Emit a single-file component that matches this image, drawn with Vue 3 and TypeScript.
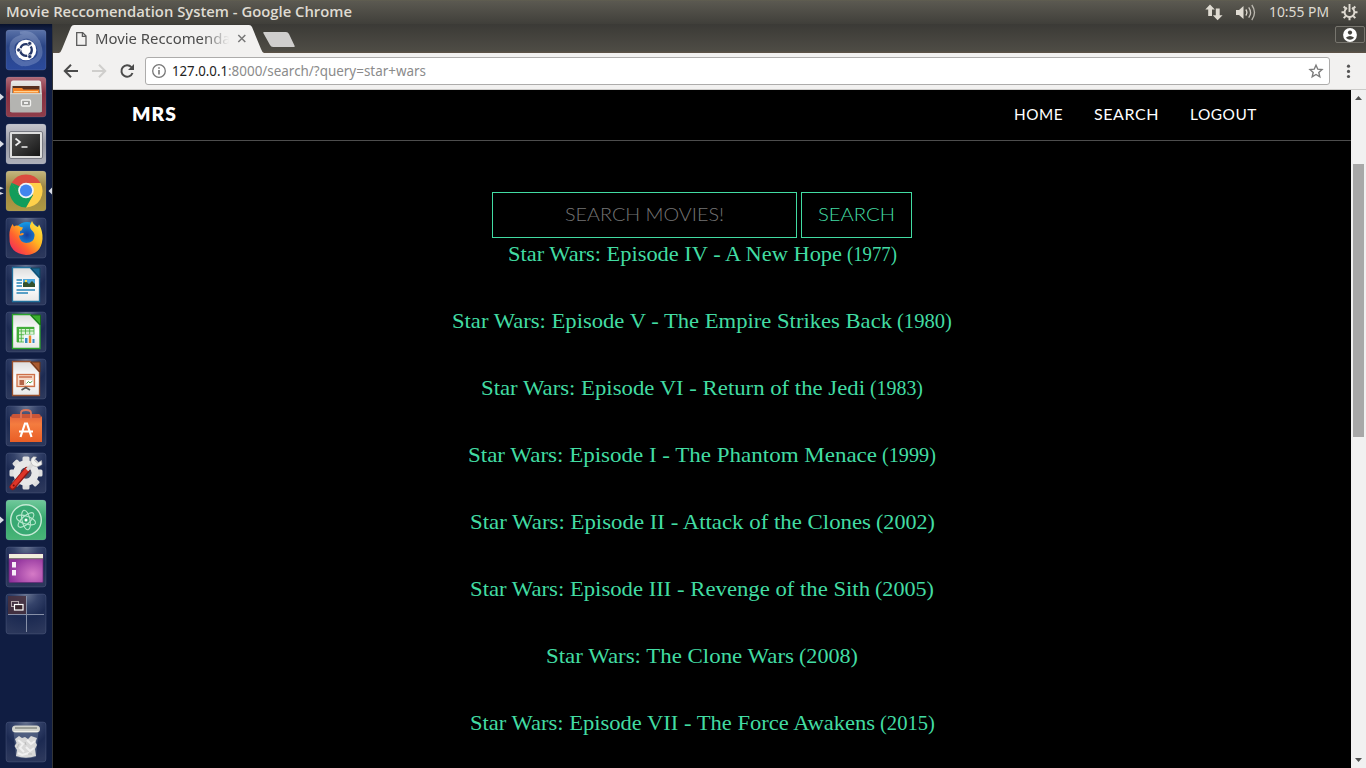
<script setup lang="ts">
import { h } from 'vue'
import type { FunctionalComponent } from 'vue'

interface FitProps { text: string; w: number; height: number; base: number }

// Single line of text set to an exact measure.
const FitText: FunctionalComponent<FitProps> = (p) =>
  h('svg', { width: p.w, height: p.height, overflow: 'visible' }, [
    h('text', { x: 0, y: p.base, textLength: p.w, lengthAdjust: 'spacingAndGlyphs' }, p.text),
  ])
FitText.props = ['text', 'w', 'height', 'base']

const nav = [
  { label: 'HOME', w: 49 },
  { label: 'SEARCH', w: 65 },
  { label: 'LOGOUT', w: 67 },
]

const movies = [
  { title: 'Star Wars: Episode IV - A New Hope', w: 334, year: '(1977)', yw: 50 },
  { title: 'Star Wars: Episode V - The Empire Strikes Back', w: 440, year: '(1980)', yw: 55 },
  { title: 'Star Wars: Episode VI - Return of the Jedi', w: 384, year: '(1983)', yw: 53 },
  { title: 'Star Wars: Episode I - The Phantom Menace', w: 409, year: '(1999)', yw: 54 },
  { title: 'Star Wars: Episode II - Attack of the Clones', w: 401, year: '(2002)', yw: 59 },
  { title: 'Star Wars: Episode III - Revenge of the Sith', w: 400, year: '(2005)', yw: 59 },
  { title: 'Star Wars: The Clone Wars', w: 248, year: '(2008)', yw: 59 },
  { title: 'Star Wars: Episode VII - The Force Awakens', w: 405, year: '(2015)', yw: 55 },
]
const teeth = [0, 45, 90, 135, 180, 225, 270, 315]
</script>

<template>
  <div class="desktop">
    <header class="panel">
      <FitText class="panel-title" text="Movie Reccomendation System - Google Chrome" :w="346" :height="24" :base="17" />
      <div class="indicators">
        <svg width="18" height="24" fill="#dfdbd2">
          <path d="M5 4.5 L9.8 9.6 H7 V16 H3.2 V9.6 H.3 Z" />
          <path d="M12.6 20.3 L17.6 15.2 H14.7 V8.5 H10.8 V15.2 H7.8 Z" />
        </svg>
        <svg class="volume" width="21" height="24" fill="none" stroke="#dfdbd2" stroke-width="1.3">
          <path d="M0 10 H3 L7.5 6 V19 L3 15 H0 Z" fill="#dfdbd2" stroke="none" />
          <path d="M9.8 9.5 Q12 12.5 9.8 15.5" />
          <path d="M12.7 7.3 Q16.4 12.5 12.7 17.7" opacity=".85" />
          <path d="M15.8 5 Q21.2 12.5 15.8 20" opacity=".75" />
        </svg>
        <FitText class="clock" text="10:55 PM" :w="60" :height="24" :base="17" />
        <svg class="gear" width="17" height="24" fill="none" stroke="#dfdbd2">
          <path d="M6 7.9 A4.9 4.9 0 1 0 11 7.9" stroke-width="1.9" />
          <path d="M8.5 4 V12" stroke-width="1.9" />
          <path d="M.5 12.3 H3.5 M13.5 12.3 H16.5 M2.7 6.5 L4.7 8.5 M14.3 6.5 L12.3 8.5 M2.7 18.1 L4.7 16.1 M14.3 18.1 L12.3 16.1 M8.5 17 V20.2" stroke-width="2" />
        </svg>
      </div>
    </header>

    <div class="below">
      <aside class="launcher">
        <svg class="defs" width="0" height="0">
          <defs>
            <radialGradient id="glass" cx=".5" cy="0" r="1">
              <stop offset="0" stop-color="#66728f" /><stop offset=".3" stop-color="#35436a" />
              <stop offset=".6" stop-color="#1c2a52" /><stop offset="1" stop-color="#2b375b" />
            </radialGradient>
            <linearGradient id="blue" x1="0" y1="0" x2="0" y2="1"><stop offset="0" stop-color="#5a72a8" /><stop offset=".4" stop-color="#2a4586" /><stop offset="1" stop-color="#2b4a9c" /></linearGradient>
            <linearGradient id="red" x1="0" y1="0" x2="0" y2="1"><stop offset="0" stop-color="#b06b78" /><stop offset=".4" stop-color="#872f40" /><stop offset="1" stop-color="#8f3d4a" /></linearGradient>
            <linearGradient id="grey" x1="0" y1="0" x2="0" y2="1"><stop offset="0" stop-color="#c5c5cc" /><stop offset=".5" stop-color="#999aa3" /><stop offset="1" stop-color="#aeb0b9" /></linearGradient>
            <linearGradient id="gold" x1="0" y1="0" x2="0" y2="1"><stop offset="0" stop-color="#c5b77e" /><stop offset=".4" stop-color="#9c8543" /><stop offset="1" stop-color="#b09a42" /></linearGradient>
            <linearGradient id="green" x1="0" y1="0" x2="0" y2="1"><stop offset="0" stop-color="#70c99b" /><stop offset=".5" stop-color="#34a76c" /><stop offset="1" stop-color="#49b578" /></linearGradient>
            <linearGradient id="metal" x1="0" y1="0" x2="0" y2="1"><stop offset="0" stop-color="#ececea" /><stop offset="1" stop-color="#9c9c98" /></linearGradient>
            <linearGradient id="paper" x1="0" y1="0" x2="0" y2="1"><stop offset="0" stop-color="#ddd" /><stop offset=".5" stop-color="#fff" /><stop offset="1" stop-color="#e8e8e8" /></linearGradient>
            <linearGradient id="orange" x1="0" y1="0" x2="0" y2="1"><stop offset="0" stop-color="#e4653b" /><stop offset=".3" stop-color="#f47c3f" /><stop offset="1" stop-color="#e95e26" /></linearGradient>
            <linearGradient id="dark" x1="0" y1="0" x2="1" y2="1"><stop offset="0" stop-color="#535353" /><stop offset="1" stop-color="#151515" /></linearGradient>
            <radialGradient id="violet" cx=".7" cy=".7" r=".7"><stop offset="0" stop-color="#d57ac6" /><stop offset="1" stop-color="#8e309b" /></radialGradient>
            <linearGradient id="flame" x1="1" y1="0" x2="0" y2="1"><stop offset="0" stop-color="#fff14a" /><stop offset=".4" stop-color="#ffb621" /><stop offset=".65" stop-color="#ff622e" /><stop offset="1" stop-color="#ed166c" /></linearGradient>
            <radialGradient id="globe"><stop offset="0" stop-color="#183e9e" /><stop offset="1" stop-color="#159de9" /></radialGradient>
          </defs>
        </svg>

        <!-- Dash -->
        <svg width="52" height="47">
          <rect class="tile" x="6" y="6" width="40" height="40" rx="3" fill="url(#blue)" />
          <g fill="none" stroke="#c7d4f0" stroke-width="5" opacity=".25">
            <path d="M15 35 Q7 18 20 14 Q31 8 38 21" /><path d="M37 17 Q45 34 32 38 Q20 44 14 30" />
            <path d="M20 9 Q34 6 39 20" stroke-width="3" /><path d="M13 20 Q7 35 23 41" stroke-width="3" />
          </g>
          <circle cx="26" cy="26" r="10.3" fill="#fff" />
          <circle cx="26" cy="26" r="5.8" fill="none" stroke="#253768" stroke-width="2.3" stroke-dasharray="10.7 1.45" stroke-dashoffset="4.6" />
          <g fill="#253768" stroke="#fff" stroke-width=".6"><circle cx="18.6" cy="26" r="2" /><circle cx="29.7" cy="19.4" r="2" /><circle cx="29.7" cy="32.6" r="2" /></g>
        </svg>

        <!-- Files -->
        <svg width="52" height="47">
          <path d="M0 22.5 L4 26 L0 29.5Z" fill="#d8dce5" />
          <rect class="tile" x="6" y="6" width="40" height="40" rx="3" fill="url(#red)" />
          <path d="M11 11 Q11.5 9.5 13 9.5 H39 Q40.5 9.5 41 11 L42 24 V41 H10 V24 Z" fill="url(#metal)" />
          <rect x="12.5" y="15" width="27" height="8" fill="#55301f" />
          <path d="M13 17 H22 L23.5 18.5 H39 V23 H13Z" fill="#f48224" /><path d="M14 20 H38 V21.3 H14Z" fill="#ffd08e" />
          <path d="M10.3 22.5 H41.7 V39.5 Q41.7 41.5 40 41.5 H12 Q10.3 41.5 10.3 39.5Z" fill="#b4b4b1" />
          <path d="M10.3 22.7 H41.7" stroke="#dededa" /><rect x="21.5" y="29" width="9" height="6" rx="1" fill="#9c9c99" stroke="#f2f2f0" stroke-width="1.3" />
          <path d="M24 32 H28" stroke="#eee" stroke-width="2" />
        </svg>

        <!-- Terminal -->
        <svg width="52" height="47">
          <path d="M0 22.5 L4 26 L0 29.5Z" fill="#d8dce5" />
          <rect class="tile" x="6" y="6" width="40" height="40" rx="3" fill="url(#grey)" />
          <rect x="9.5" y="13.5" width="33" height="27" rx="1.5" fill="#ddd" stroke="#777982" />
          <rect x="12" y="16" width="28" height="22" fill="url(#dark)" />
          <path d="M15.5 20.5 L20 24 L15.5 27.5" fill="none" stroke="#eee" stroke-width="1.7" /><path d="M21.5 29 H27.5" stroke="#eee" stroke-width="1.5" />
        </svg>

        <!-- Chrome -->
        <svg width="52" height="47">
          <path d="M0 21.8 L3.8 23.2 L0 24.6Z M0 27 L3.8 28.4 L0 29.8Z" fill="#d8dce5" />
          <rect class="tile" x="6" y="6" width="40" height="40" rx="3" fill="url(#gold)" />
          <path d="M26 26 L11.7 17.7 A16.5 16.5 0 0 1 40.3 17.7 Z" fill="#db4c3f" />
          <path d="M26 18 H40.5 A16.5 16.5 0 0 1 26 42.5 L33 30 Z" fill="#ffd04a" />
          <path d="M11.7 17.7 A16.5 16.5 0 0 0 26 42.5 L33 30 H19 Z" fill="#119d5b" />
          <path d="M11.7 17.7 L19 30 L21 22Z" fill="#119d5b" />
          <circle cx="26" cy="25.5" r="7.8" fill="#f1f3f5" /><circle cx="26" cy="25.5" r="6.1" fill="#4285ee" />
          <path d="M52 22.5 L48.5 26 L52 29.5Z" fill="#d8dce5" />
        </svg>

        <!-- Firefox -->
        <svg width="52" height="47">
          <rect class="tile" x="6" y="6" width="40" height="40" rx="3" fill="url(#glass)" />
          <circle cx="27" cy="23" r="13" fill="url(#globe)" />
          <path d="M11 15 L12.5 12 L14 14.5 Q17 12.5 20.5 15 L23 15.5 L21.5 18.5 L20 19 V22 Q23 20 24 22 Q22 24 19 23.5 Q19.5 30 26 31 Q34 31 34.5 24 Q35 21 31.5 18 Q29 15 30.5 12 L32 9 Q34 14 38 15 L39 12.5 Q43 19 42.5 27 Q41 42.5 26 43 Q9 41 9.5 26 Q9 19 11 15Z" fill="url(#flame)" />
        </svg>

        <!-- Writer -->
        <svg width="52" height="47">
          <rect class="tile" x="6" y="6" width="40" height="40" rx="3" fill="url(#glass)" />
          <path d="M12.5 8.5 H30 L39.5 19 V42.5 H12.5Z" fill="url(#paper)" stroke="#206f9b" stroke-width="1.3" />
          <path d="M31 9 H40 V19Z" fill="#196591" stroke="#10435e" />
          <path d="M16.5 21 H22 M16.5 24 H22 M16.5 27 H22 M16.5 31 H35 M16.5 34 H28" stroke="#2484b8" stroke-width="1.7" />
          <rect x="23" y="20" width="12" height="8" fill="#4aa7df" /><path d="M23 28 V24 L26 22 L29 25 L32 22 L35 25 V28Z" fill="#32512d" /><circle cx="26" cy="22" r="1.2" fill="#f7dc4f" />
        </svg>

        <!-- Calc -->
        <svg width="52" height="47">
          <rect class="tile" x="6" y="6" width="40" height="40" rx="3" fill="url(#glass)" />
          <path d="M12.5 8.5 H30 L40 19 V42.5 H12.5Z" fill="url(#paper)" stroke="#2ba52d" stroke-width="1.3" />
          <path d="M31 9 H40.5 V19Z" fill="#3aae2d" stroke="#176a19" />
          <rect x="17" y="21" width="17" height="15" fill="#dbf2d5" />
          <path d="M17 21 H34 V23 H17Z M17 21 H19 V36 H17Z" fill="#43ae3a" /><path d="M17 21.3 H34 M17 25 H34 M17 28.7 H34 M17 32.3 H34 M17 36 H34 M17 21 V36 M21.3 21 V36 M25.5 21 V36 M29.7 21 V36 M34 21 V36" stroke="#43ae3a" stroke-width=".8" />
          <rect x="24" y="28.5" width="11" height="9" fill="#eef5fb" /><path d="M25 32 H27.5 V37 H25Z M32.5 33 H34.5 V37 H32.5Z" fill="#3a8bc1" /><path d="M28.8 29.5 H31.2 V37 H28.8Z" fill="#ee8b28" />
        </svg>

        <!-- Impress -->
        <svg width="52" height="47">
          <rect class="tile" x="6" y="6" width="40" height="40" rx="3" fill="url(#glass)" />
          <path d="M12.5 8.5 H30 L39.5 19 V42.5 H12.5Z" fill="url(#paper)" stroke="#98502d" stroke-width="1.3" />
          <path d="M31 9 H40 V19Z" fill="#a85a30" stroke="#653319" />
          <rect x="17" y="21.5" width="17.5" height="12" fill="#f5d9c7" stroke="#cd7048" stroke-width="1.3" /><path d="M19 24 H32" stroke="#c45e3c" stroke-width="1.3" />
          <path d="M19.5 27 H24 V32 H19.5Z" fill="#b46549" /><rect x="26" y="27" width="7" height="5" fill="#fff" /><path d="M26.5 30.5 L28.5 28.5 L30 30 L32.5 28" fill="none" stroke="#57a247" />
          <path d="M21.5 37 L25.8 34.5 L30 37" fill="none" stroke="#555" stroke-width="1.7" />
        </svg>

        <!-- Software -->
        <svg width="52" height="47">
          <rect class="tile" x="6" y="6" width="40" height="40" rx="3" fill="url(#glass)" />
          <path d="M10 16.5 H42 V42 H10Z" fill="url(#orange)" /><path d="M11.5 15 L13 14 H39 L40.5 15 V18 H11.5Z" fill="#c95537" />
          <path d="M21 18.5 V13 Q21 10 26 10 Q31 10 31 13 V18.5" fill="none" stroke="#dc765a" stroke-width="1.8" />
          <path d="M20.5 37 L25 23.5 H27 L31.5 37 M19 31.5 H33" fill="none" stroke="#fff" stroke-width="2.2" />
        </svg>

        <!-- Settings -->
        <svg width="52" height="47">
          <rect class="tile" x="6" y="6" width="40" height="40" rx="3" fill="url(#glass)" />
          <g fill="#dedede"><rect v-for="a in teeth" :key="a" x="22.5" y="9.5" width="7" height="8" rx="1.5" :transform="`rotate(${a} 26 26)`" /></g>
          <circle cx="26" cy="26" r="9" fill="none" stroke="#e7e7e7" stroke-width="7.5" /><circle cx="26" cy="26" r="5.5" fill="#4a5067" />
          <path d="M12.5 40 L27 23" stroke="#8e1714" stroke-width="6" stroke-linecap="round" /><path d="M12.5 39.5 L27 22.5" stroke="#df3528" stroke-width="4" stroke-linecap="round" />
          <path d="M27 23 L34 15.5" stroke="#d9d9d9" stroke-width="3.5" />
          <path d="M33.5 9.8 Q29.5 12 31.5 17 Q36 22 42 17.5 L41.5 13.5 L37.5 16 L34.5 13.5 L36.5 10Z" fill="#f1f1ef" stroke="#aaa" stroke-width=".6" /><circle cx="13.7" cy="38.4" r="1" fill="#611" />
        </svg>

        <!-- Atom -->
        <svg width="52" height="47">
          <path d="M0 22.5 L4 26 L0 29.5Z" fill="#d8dce5" />
          <rect class="tile" x="6" y="6" width="40" height="40" rx="3" fill="url(#green)" />
          <circle cx="26" cy="26" r="15.3" fill="#38a973" stroke="#c5ead5" stroke-width="1.4" />
          <g fill="none" stroke="#b5e7cc" stroke-width="1.1"><ellipse cx="26" cy="26" rx="10" ry="4" transform="rotate(18 26 26)" /><ellipse cx="26" cy="26" rx="10" ry="4" transform="rotate(78 26 26)" /><ellipse cx="26" cy="26" rx="10" ry="4" transform="rotate(138 26 26)" /></g>
          <circle cx="26" cy="26" r="1.5" fill="#fff" />
        </svg>

        <!-- Desktop -->
        <svg width="52" height="47">
          <rect class="tile" x="6" y="6" width="40" height="40" rx="3" fill="url(#glass)" />
          <rect x="9" y="13" width="34" height="28.5" rx="1" fill="url(#violet)" stroke="#642877" stroke-width=".7" />
          <path d="M9 13 H43 V17.5 H9Z" fill="#f1efdc" /><path d="M9 17.7 H43" stroke="#77736b" />
          <path d="M12 21 H16 V26.5 H12Z M12 29 H16 V34.5 H12Z" fill="#f7edf7" />
        </svg>

        <!-- Workspaces -->
        <svg width="52" height="47">
          <rect class="tile" x="6" y="6" width="40" height="40" rx="3" fill="url(#glass)" />
          <path d="M8 8 H26 V26 H8Z" fill="#48303d" opacity=".85" />
          <path d="M26.5 8 V44 M8 26.5 H44" stroke="#8790a8" />
          <rect x="11.5" y="13.5" width="7" height="5" fill="none" stroke="#b6a9ae" /><rect x="14.5" y="16.5" width="8.5" height="5.5" fill="#38252e" stroke="#fff" stroke-width="1.2" />
        </svg>

        <!-- Trash -->
        <svg class="trash" width="52" height="52">
          <rect class="tile" x="6" y="6" width="40" height="40" rx="3" fill="url(#glass)" />
          <path d="M13.5 15 L16 41 Q26 43.5 36 41 L38.5 15Z" fill="#7e8ba4" opacity=".4" />
          <path d="M15 23 L19 20 L22 22 L25 21 L28 23 L31 20 L37 22 L35.5 26 L37 29 L35 33 L36 40 Q26 43.5 16 40 L17 34 L14.5 30 L16.5 27Z" fill="#d8d8d8" />
          <path d="M18 24 L23 28 L20 32 L24 36 M27 24 L31 28 L35 25 M26 31 L30 35 L34 32 M18 37 L22 39 L29 37" fill="none" stroke="#f0f0f0" stroke-width="2" />
          <path d="M19 28 L17 32 M25 26 L26 29 M28 38 L32 38" stroke="#bbb" />
          <rect x="12" y="9.5" width="28" height="7" rx="3.5" fill="#d2d3cd" /><path d="M15 12 H37" stroke="#9a9d97" stroke-width="2" /><path d="M14 15.5 H38" stroke="#f0f0e8" />
        </svg>
      </aside>

      <section class="browser">
        <div class="tabs">
          <div class="tab">
            <svg class="tab-shape" width="250" height="29">
              <path d="M6 29 Q8 28 9 25 L18 3 Q19 1 21 1 H196 Q198 1 199 3 L208 25 Q209 28 211 29Z" fill="#f2f1f0" />
              <path d="M211 8 H233 Q235 8 236 10 L241.7 22 Q242 23 241 23 H220 Q218 23 217 21 L210.3 9 Q210 8 211 8Z" fill="#cfcecd" />
            </svg>
            <div class="tab-content">
              <svg width="12" height="29" fill="none" stroke="#5a5a5a" stroke-width="1.3"><path d="M.7 8.6 H6.7 L10 12 V21.4 H.7Z M6.4 8.6 V12.3 H10" /></svg>
              <div class="tab-name"><FitText text="Movie Reccomendat" :w="141" :height="29" :base="20" /></div>
              <svg class="close" width="9" height="29" stroke="#777" stroke-width="1.5"><path d="M1.3 11 L8.3 18 M8.3 11 L1.3 18" /></svg>
            </div>
          </div>
          <div class="profile">
            <svg width="14" height="14"><circle cx="7" cy="7" r="6.9" fill="#fff" /><circle cx="7" cy="4.6" r="2.1" fill="#45443f" /><path d="M2.8 9.8 Q7 6.2 11.2 9.8 Q7 13.5 2.8 9.8Z" fill="#45443f" /></svg>
          </div>
        </div>

        <div class="toolbar">
          <svg width="92" height="36" fill="none" stroke-width="2">
            <path d="M25 18 H12 M18 11.8 L11.8 18 L18 24.2" stroke="#4b4b4b" />
            <path d="M39 18 H52 M46 11.8 L52.2 18 L46 24.2" stroke="#cfcecc" />
            <path d="M78.4 14.2 A5.7 5.7 0 1 0 79.5 20" stroke="#4b4b4b" /><path d="M81 11 V17 H75Z" fill="#4b4b4b" />
          </svg>
          <div class="address">
            <svg width="26" height="26" fill="none" stroke="#777" stroke-width="1.3"><circle cx="13" cy="13" r="6.3" /><path d="M13 12 V16.5 M13 9.3 V10.7" stroke-width="1.6" /></svg>
            <FitText class="host" text="127.0.0.1" :w="56" :height="26" :base="18" />
            <FitText class="path" text=":8000/search/?query=star+wars" :w="198" :height="26" :base="18" />
            <svg class="star" width="16" height="26" fill="none" stroke="#7b7b7b" stroke-width="1.4"><path d="M8 7.2 L9.8 11.2 L14 11.6 L10.8 14.5 L11.8 18.8 L8 16.5 L4.2 18.8 L5.2 14.5 L2 11.6 L6.2 11.2Z" /></svg>
          </div>
          <svg width="36" height="36" fill="#555"><circle cx="18.5" cy="13.2" r="1.6" /><circle cx="18.5" cy="18.4" r="1.6" /><circle cx="18.5" cy="23.5" r="1.6" /></svg>
        </div>

        <div class="viewport">
          <main class="page">
            <nav class="navbar">
              <FitText class="brand" text="MRS" :w="45" :height="50" :base="31" />
              <div class="links">
                <a v-for="n in nav" :key="n.label"><FitText :text="n.label" :w="n.w" :height="50" :base="30" /></a>
              </div>
            </nav>
            <form class="search" @submit.prevent>
              <div class="field"><FitText text="SEARCH MOVIES!" :w="159" :height="44" :base="28" /></div>
              <button class="submit"><FitText text="SEARCH" :w="77" :height="44" :base="28" /></button>
            </form>
            <div class="results">
              <a v-for="m in movies" :key="m.title">
                <FitText :text="m.title" :w="m.w" :height="67" :base="23" />
                <FitText :text="m.year" :w="m.yw" :height="67" :base="23" />
              </a>
            </div>
          </main>
          <div class="scrollbar">
            <svg width="15" height="15"><path d="M4 10 H11 L7.5 6Z" fill="#505050" /></svg>
            <div class="thumb"></div>
            <svg class="down" width="15" height="15"><path d="M4 5 H11 L7.5 9Z" fill="#505050" /></svg>
          </div>
        </div>
      </section>
    </div>
  </div>
</template>

<style>
body { margin: 0; overflow: hidden; background: #000; }
</style>

<style scoped>
* { box-sizing: border-box; }
svg { display: block; flex: none; }
.desktop { width: 1366px; height: 768px; display: flex; flex-direction: column; overflow: hidden; font-family: "Noto Sans", "Open Sans", sans-serif; }
.panel { height: 24px; display: flex; justify-content: space-between; padding: 0 8px 0 6px; background: linear-gradient(#62604f 0, #5b5951 1px, #403f3a 24px); }
.panel-title { font-family: "Open Sans", "Noto Sans", sans-serif; font-size: 14px; font-weight: 600; fill: #dfdbd2; }
.indicators { display: flex; }
.volume { margin-left: 13px; }
.clock { margin-left: 12px; font-size: 14px; fill: #dfdbd2; }
.gear { margin-left: 12px; }
.below { flex: 1; display: flex; min-height: 0; }
.launcher { width: 53px; display: flex; flex-direction: column; background: linear-gradient(#08112b 0, #101d42 5px, #101d42 100%); border-right: 1px solid #333538; }
.defs { display: block; }
.tile { stroke: rgba(160, 172, 205, .18); stroke-width: 1px; }
.trash { margin-top: auto; }
.browser { flex: 1; display: flex; flex-direction: column; min-width: 0; }
.tabs { height: 29px; display: flex; justify-content: space-between; background: linear-gradient(#3b3a36, #4e4c45 27px, #605347 29px); }
.tab { display: grid; }
.tab-shape, .tab-content { grid-area: 1 / 1; }
.tab-content { display: flex; padding-left: 23px; }
.tab-name { width: 134px; margin-left: 7px; overflow: hidden; font-size: 14.5px; fill: #4c4c4c; -webkit-mask-image: linear-gradient(90deg, #000 108px, transparent 134px); mask-image: linear-gradient(90deg, #000 108px, transparent 134px); }
.close { margin-left: 8px; }
.profile { width: 30px; height: 17px; margin: 2px 1px 0 0; display: flex; align-items: center; justify-content: center; border: 1px solid #77756e; border-radius: 2px; background: #44433e; }
.toolbar { height: 37px; display: flex; background: #f2f1f0; border-bottom: 1px solid #cccbc9; }
.address { flex: 1; height: 28px; margin: 4px 0 0; display: flex; background: #fff; border: 1px solid #adacab; border-radius: 3px; font-size: 14.5px; }
.host { fill: #222; }
.path { fill: #8b8b8b; }
.star { margin-left: auto; margin-right: 5px; }
.viewport { flex: 1; display: flex; min-height: 0; background: #000; }
.page { flex: 1; overflow: hidden; font-family: Lato, "Liberation Sans", sans-serif; }
.navbar { height: 51px; display: flex; justify-content: space-between; padding: 0 94px 0 79px; border-bottom: 1px solid #4d4d4d; fill: #fff; }
.brand { font-size: 18px; font-weight: 800; letter-spacing: 1px; }
.links { display: flex; gap: 31px; font-size: 14.5px; letter-spacing: .5px; }
.search { display: flex; justify-content: center; gap: 4px; margin-top: 51px; font-size: 18px; font-weight: 300; }
.field { width: 305px; height: 46px; display: flex; justify-content: center; border: 1px solid #42dca3; fill: #757575; }
.submit { width: 111px; height: 46px; padding: 0; display: flex; justify-content: center; background: transparent; border: 1px solid #42dca3; font: inherit; fill: #42dca3; }
.results { display: flex; flex-direction: column; align-items: center; font-family: "Liberation Serif", serif; font-size: 21.5px; fill: #42dca3; }
.results a { display: flex; gap: 5px; height: 67px; }
.scrollbar { width: 15px; display: flex; flex-direction: column; align-items: center; background: #f1f1f1; }
.thumb { width: 11px; height: 273px; margin-top: 59px; background: #a8a8a8; }
.down { margin-top: auto; }
</style>
